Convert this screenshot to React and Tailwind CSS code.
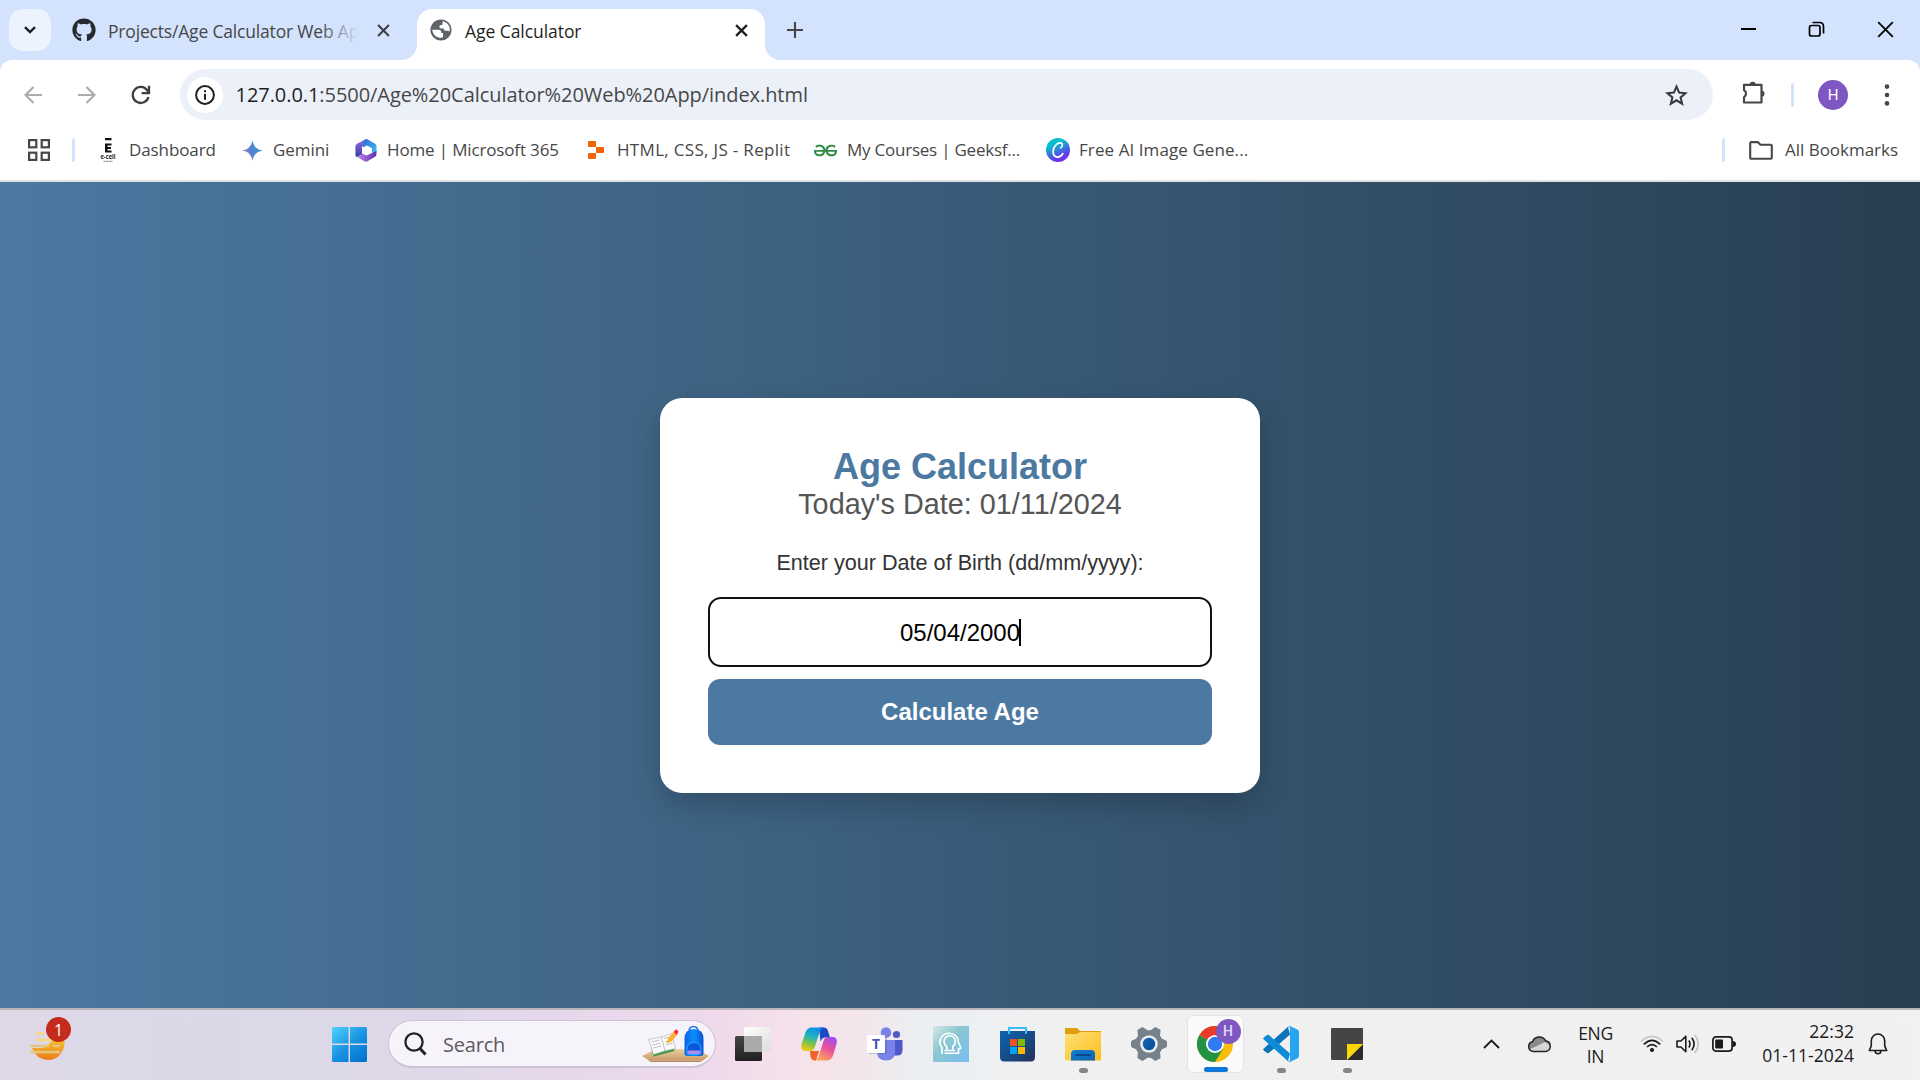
import React from 'react';
import { FaGithub } from 'react-icons/fa';
import { SiGeeksforgeeks } from 'react-icons/si';

/* ---------- Browser icons ---------- */

const GlobeIcon = () => (
  <svg width="22" height="22" viewBox="0 0 22 22" className="shrink-0">
    <circle cx="11" cy="11" r="10.6" fill="#5f6368" />
    <path
      d="M12.2 2.2C16.6 2.6 19.8 6.4 19.8 10.6c0 .8-.1 1.4-.3 2-.6-.3-1-.9-1.8-.9h-2c-1.2 0-1.9-.8-1.9-1.8V9.400h-2.700c-1 0-1.700-.7-1.700-1.600 0-.9.7-1.700 1.700-1.700h.8c.4 0 .5-.4.5-.9 0-.8.100-1.400.5-1.800-.3-.4-.6-.8-.7-1.200z"
      fill="#fff"
    />
    <path
      d="M2.300 10.800h5.800c2.200 0 3.300 1 3.300 2.600v.7h1.700v3c0 1-.7 1.700-1.700 1.700H9.500c-4-.8-7-4-7.200-8z"
      fill="#fff"
    />
  </svg>
);

const Cross = ({ size, width, color }) => (
  <svg width={size} height={size} viewBox="0 0 12 12" className="shrink-0">
    <path d="M1 1l10 10M11 1L1 11" stroke={color} strokeWidth={width} />
  </svg>
);

const Arrow = ({ flip }) => (
  <svg width="18" height="18" viewBox="0 0 18 18" className={flip ? 'rotate-180' : ''}>
    <path d="M18 9H2M9.500 1L1.500 9l8 8" fill="none" stroke="#acacac" strokeWidth="2.200" />
  </svg>
);

const ReloadIcon = () => (
  <svg width="20" height="20" viewBox="0 0 20 20">
    <path d="M17.500 12A8 8 0 1 1 16.200 5.200L17.500 7" fill="none" stroke="#3c4043" strokeWidth="2.300" />
    <path d="M18 .8v7.400h-7.400" fill="none" stroke="#3c4043" strokeWidth="2.300" />
  </svg>
);

const InfoIcon = () => (
  <svg width="20" height="20" viewBox="0 0 20 20">
    <circle cx="10" cy="10" r="8.900" fill="none" stroke="#1f1f1f" strokeWidth="2" />
    <rect x="9" y="8.800" width="2" height="6" fill="#1f1f1f" />
    <rect x="9" y="5.200" width="2" height="2" fill="#1f1f1f" />
  </svg>
);

const StarIcon = () => (
  <svg width="23" height="22" viewBox="0 0 23 22">
    <path
      d="M11.500 2.600l2.600 6 6.400.6-4.900 4.200 1.500 6.300-5.600-3.400-5.600 3.400 1.500-6.300L2.500 9.200l6.400-.6z"
      fill="none"
      stroke="#3c3c3c"
      strokeWidth="2.100"
    />
  </svg>
);

const PuzzleIcon = () => (
  <svg width="26" height="26" viewBox="0 0 26 26">
    <path
      d="M3 4.800h17.500v17.700H3v-5.300a4.200 4.200 0 0 0 0-7.200z"
      fill="none"
      stroke="#474747"
      strokeWidth="2.200"
      strokeLinejoin="round"
    />
    <path d="M8.500 4.200a3.300 3.300 0 0 1 6.400 0zM21 10.400a3.200 3.200 0 0 1 0 6.300z" fill="#474747" />
  </svg>
);

const FolderIcon = () => (
  <svg width="24" height="19" viewBox="0 0 24 19" className="shrink-0">
    <path
      d="M1.200 2.200q0-1.100 1.100-1.100h6.500l2.600 2.700h10.300q1.100 0 1.100 1.100v11.800q0 1.100-1.100 1.100H2.300q-1.100 0-1.100-1.100z"
      fill="none"
      stroke="#474747"
      strokeWidth="2.100"
    />
  </svg>
);

const AppsIcon = () => (
  <svg width="22" height="22" viewBox="0 0 22 22" className="shrink-0">
    <g fill="none" stroke="#474747" strokeWidth="2.200">
      <rect x="1.100" y="1.100" width="7.200" height="7.200" />
      <rect x="13.700" y="1.100" width="7.200" height="7.200" />
      <rect x="1.100" y="13.700" width="7.200" height="7.200" />
      <rect x="13.700" y="13.700" width="7.200" height="7.200" />
    </g>
  </svg>
);

const EcellIcon = () => (
  <svg width="16" height="25" viewBox="0 0 16 25">
    <path d="M5 0h6.500v2.200H5zM5 5.500h6.500v2H7.500v1.600h3.500v1.900H7.500v1.600h4v2H5z" fill="#111" />
    <text x="8" y="21" textAnchor="middle" fontSize="6.800" fontWeight="700" fontFamily="Open Sans" fill="#222" textLength="15" lengthAdjust="spacingAndGlyphs">e-cell</text>
    <path d="M3.500 23.300h9" stroke="#777" strokeWidth="1" strokeDasharray="2 .6" />
  </svg>
);

const GeminiIcon = () => (
  <svg width="21" height="21" viewBox="0 0 21 21">
    <defs>
      <linearGradient id="gem" x1="0" y1=".6" x2="1" y2=".4">
        <stop offset="0" stopColor="#a07bc5" />
        <stop offset=".45" stopColor="#4f83cc" />
        <stop offset="1" stopColor="#3aa0e0" />
      </linearGradient>
    </defs>
    <path d="M10.500 0C11.200 6 15 9.800 21 10.500 15 11.200 11.200 15 10.500 21 9.800 15 6 11.200 0 10.500 6 9.800 9.800 6 10.500 0z" fill="url(#gem)" />
  </svg>
);

const M365Icon = () => (
  <svg width="22" height="23" viewBox="0 0 22 23">
    <defs>
      <linearGradient id="ma" x1="0" y1="0" x2="0" y2="1">
        <stop offset="0" stopColor="#a36ae0" />
        <stop offset="1" stopColor="#2f3fa8" />
      </linearGradient>
      <linearGradient id="mb" x1="0" y1="0" x2="1" y2="1">
        <stop offset="0" stopColor="#2c69d6" />
        <stop offset="1" stopColor="#3ec4f2" />
      </linearGradient>
      <linearGradient id="mc" x1="0" y1="0" x2="1" y2="0">
        <stop offset="0" stopColor="#c585ee" />
        <stop offset="1" stopColor="#5c34a6" />
      </linearGradient>
    </defs>
    <path d="M11 0L2 4.800Q.4 5.700.4 7.500v8.200q0 1.600 1.500 2.500L7 15.500V8l6-7z" fill="url(#ma)" />
    <path d="M11 0q-3 1.500-3 5v3.500l4-2 5 2.800v5.200l3.600-.8q.9-.5.9-1.800V7.200q0-1.600-1.400-2.400L12.800.4Q12 0 11 0z" fill="url(#mb)" />
    <path d="M1.500 17.500l7.800 4.700q1.600.9 3.300 0l7.400-4.400q1.500-.9 1.500-2.800V12l-10 4.600-4.500-2q-1 3.500-5.500 2.900z" fill="url(#mc)" />
    <path d="M11 7.300l3.800 2v4.600l-3.800 2.200-3.800-2.200V9.300z" fill="#fff" />
  </svg>
);

const ReplitIcon = () => (
  <svg width="16" height="18" viewBox="0 0 16 18">
    <path d="M1 0h6q1 0 1 1v5H1Q0 6 0 5V1Q0 0 1 0zM8 6h7q1 0 1 1v4q0 1-1 1H8zM1 12h7v5q0 1-1 1H1q-1 0-1-1v-4q0-1 1-1z" fill="#f26207" />
  </svg>
);

const CanvaIcon = () => (
  <svg width="24" height="24" viewBox="0 0 24 24">
    <defs>
      <linearGradient id="canva" x1=".25" y1="0" x2=".7" y2="1">
        <stop offset="0" stopColor="#00c4cc" />
        <stop offset=".25" stopColor="#0bbdd0" />
        <stop offset=".75" stopColor="#5a43e8" />
        <stop offset="1" stopColor="#7d2ae8" />
      </linearGradient>
    </defs>
    <circle cx="12" cy="12" r="12" fill="url(#canva)" />
    <path
      d="M14.800 9.800c1.800-.8 2.300-4.300 0-4.900-3.300-.7-7.300 3.500-7.700 8.300-.3 3.600 1.800 6.200 4.900 5.900 2.200-.2 3.900-1.500 4.800-3.500"
      fill="none"
      stroke="#fff"
      strokeWidth="1.700"
      strokeLinecap="round"
    />
  </svg>
);

/* ---------- Taskbar icons ---------- */

const WeatherIcon = () => (
  <svg width="36" height="28" viewBox="0 0 36 28">
    <defs>
      <linearGradient id="sun" x1="0" y1="0" x2="0" y2="1">
        <stop offset="0" stopColor="#f5bf2a" />
        <stop offset="1" stopColor="#f07a1a" />
      </linearGradient>
    </defs>
    <path d="M2 16h10q7-2 10-8h12.500Q35 16 30.500 22T17.500 28Q6 27 2 16z" fill="url(#sun)" />
    <g strokeWidth="2.600" strokeLinecap="round">
      <path d="M7 1.500h6M7 8h14" stroke="#f4da7a" />
      <path d="M1.500 14H18M24 14h5M1.500 20H29" stroke="#e2c77f" />
    </g>
  </svg>
);

const WindowsIcon = () => (
  <svg width="35" height="35" viewBox="0 0 35 35">
    <defs>
      <linearGradient id="win" gradientUnits="userSpaceOnUse" x1="0" y1="0" x2="30" y2="35">
        <stop offset="0" stopColor="#4fd3fd" />
        <stop offset=".55" stopColor="#1a93e2" />
        <stop offset="1" stopColor="#0273d0" />
      </linearGradient>
    </defs>
    <path d="M1.500 0H16.500V16.500H0V1.500Q0 0 1.500 0zM18 0h15.500Q35 0 35 1.500v15H18zM0 18h16.500v17h-15Q0 35 0 33.500zM18 18h17v15.500q0 1.500-1.500 1.500H18z" fill="url(#win)" />
  </svg>
);

const SchoolArt = () => (
  <svg width="67" height="38" viewBox="0 0 67 38">
    <defs>
      <linearGradient id="desk" x1="0" y1="0" x2="0" y2="1">
        <stop offset="0" stopColor="#ecd0a0" />
        <stop offset="1" stopColor="#c99a68" />
      </linearGradient>
      <linearGradient id="bag" x1="0" y1="0" x2="1" y2="0">
        <stop offset="0" stopColor="#0a63e6" />
        <stop offset=".5" stopColor="#0d8dff" />
        <stop offset="1" stopColor="#0a4fd0" />
      </linearGradient>
    </defs>
    <path d="M0 31l14-7h40l13 7-6 4.500H7z" fill="url(#desk)" />
    <path d="M6 35.500h55l-3 1.500H9z" fill="#b5875a" />
    <path d="M7.500 16l4 15.500 21-5.500-1-3.500z" fill="#3f9a4b" />
    <path d="M6.500 14.500l13-2.500 10-3.500 4 15-11 2.500-11 3.500z" fill="#fafafa" stroke="#a9aaae" strokeWidth=".6" />
    <path d="M19.500 12l3.500 14M9.500 17l8-2M10.500 20l8-2M11.200 23l8-2M22 13.500l7-2M23 17l7-2M24 20l7-2" stroke="#a7a9af" strokeWidth=".7" />
    <path d="M24.500 18.500l1.500-5 5.500-6.500 3.500 3-5.500 6.500z" fill="#ffb02e" />
    <path d="M31.500 7l1.500-2q1-1 2.500.2t.5 2.500L34.800 10z" fill="#f8312f" />
    <path d="M47 7q0-5.500 4.500-5.500T56 7" fill="none" stroke="#2a78e8" strokeWidth="1.600" />
    <path d="M42.500 14q0-10 9.500-10t9.500 10v14q0 3-3 3h-13q-3 0-3-3z" fill="url(#bag)" />
    <path d="M45 28v-4q0-6.500 7-6.500t7 6.500v4q0 1.500-1.500 1.500h-11Q45 29.500 45 28z" fill="#0b57d8" stroke="#1fb0ff" strokeWidth=".9" />
    <path d="M45.500 25.500h13v2q0 1.500-1.500 1.500H47q-1.500 0-1.500-1.500z" fill="#a98cf5" />
  </svg>
);

const TaskViewIcon = () => (
  <svg width="36" height="36" viewBox="0 0 36 36">
    <defs>
      <linearGradient id="tvd" x1="0" y1="0" x2="0" y2="1">
        <stop offset="0" stopColor="#454545" />
        <stop offset="1" stopColor="#202020" />
      </linearGradient>
      <linearGradient id="tvl" x1="0" y1="0" x2="1" y2="1">
        <stop offset="0" stopColor="#fff" />
        <stop offset="1" stopColor="#dcdcdc" />
      </linearGradient>
    </defs>
    <rect x="0" y="10" width="27" height="25" rx="1.500" fill="url(#tvd)" />
    <rect x="9" y="1" width="27" height="25" rx="1.500" fill="url(#tvl)" />
    <path d="M9 10h18v16H10.500Q9 26 9 24.500z" fill="#aaa" />
  </svg>
);

const CopilotIcon = () => (
  <svg width="36" height="34" viewBox="0 0 36 34">
    <defs>
      <linearGradient id="cpa" x1=".6" y1="0" x2=".3" y2="1">
        <stop offset="0" stopColor="#0a8ee8" />
        <stop offset=".4" stopColor="#1fb4c0" />
        <stop offset=".7" stopColor="#86c440" />
        <stop offset="1" stopColor="#f3cb18" />
      </linearGradient>
      <linearGradient id="cpb" x1=".8" y1="0" x2=".3" y2="1">
        <stop offset="0" stopColor="#9a4df0" />
        <stop offset=".45" stopColor="#e8509c" />
        <stop offset="1" stopColor="#ffa55c" />
      </linearGradient>
    </defs>
    <path d="M18 .5h5q3 0 4 3.500l2 6.500h-5q-3 0-4.500 4z" fill="#1b49c8" />
    <path d="M9 24h9l-3 9.500h-1.500q-3 0-4-4z" fill="#f4622a" />
    <path d="M11 .5h12q-3 .5-4.500 5L14 19.500q-1.200 4.300-4 4.500H4.500Q-1 24 .5 17L4.500 5.500Q6.200.5 11 .5z" fill="url(#cpa)" />
    <path d="M25.500 33.500H13.500q3-.5 4.500-5l4.300-14Q23.600 10 26.500 10h5q5.500 0 4 7L32 28.500q-1.700 5-6.500 5z" fill="url(#cpb)" />
  </svg>
);

const TeamsIcon = () => (
  <svg width="36" height="34" viewBox="0 0 36 34">
    <circle cx="29.500" cy="7.500" r="3.600" fill="#5059c9" />
    <circle cx="19" cy="5.500" r="5.300" fill="#7b83eb" />
    <path d="M24 13h11.500v10q0 5.500-5 5.500H24z" fill="#5059c9" />
    <path d="M10 13h18v12q0 8.500-9 8.500T10 25z" fill="#7b83eb" />
    <rect x="2" y="9" width="18" height="18" fill="#4a50a8" opacity=".3" />
    <rect x="0" y="8" width="18" height="18" rx="1" fill="#fff" />
    <text x="9" y="22" textAnchor="middle" fontSize="14" fontWeight="700" fontFamily="Open Sans" fill="#4b53bc">T</text>
  </svg>
);

const HeadIcon = () => (
  <svg width="36" height="36" viewBox="0 0 36 36">
    <defs>
      <linearGradient id="head" x1="0" y1="0" x2="1" y2="1">
        <stop offset="0" stopColor="#d5e8e4" />
        <stop offset=".4" stopColor="#8cc8d0" />
        <stop offset="1" stopColor="#79bcf2" />
      </linearGradient>
    </defs>
    <rect width="36" height="36" fill="url(#head)" />
    <g fill="none" stroke="#fff" strokeWidth="1.600">
      <path d="M9 28v-6.500Q6.800 19 6.800 16.500A9.300 9 0 0 1 25.400 16l2.400 6-2.300 1v4.300H11.500" />
      <path d="M11.500 24.500h10.500M13.800 24v-3.500q-2.800-2-2.800-5a5.700 5.700 0 0 1 11.400 0q0 3-2.600 5V24" />
    </g>
  </svg>
);

const StoreIcon = () => (
  <svg width="35" height="36" viewBox="0 0 35 36">
    <defs>
      <linearGradient id="store" x1="0" y1="0" x2="1" y2="1">
        <stop offset="0" stopColor="#0b66b5" />
        <stop offset="1" stopColor="#243158" />
      </linearGradient>
    </defs>
    <path d="M0 5h35v26q0 4.500-4.500 4.500h-26Q0 35.500 0 31z" fill="url(#store)" />
    <path d="M9 8V2h17v6" fill="none" stroke="#38bdf2" strokeWidth="2" />
    <rect x="10" y="13" width="7" height="7" fill="#f25022" />
    <rect x="18" y="13" width="7" height="7" fill="#7fba00" />
    <rect x="10" y="21" width="7" height="7" fill="#00a4ef" />
    <rect x="18" y="21" width="7" height="7" fill="#ffb900" />
  </svg>
);

const ExplorerIcon = () => (
  <svg width="36" height="33" viewBox="0 0 36 33">
    <defs>
      <linearGradient id="fold" x1="0" y1="0" x2="1" y2="1">
        <stop offset="0" stopColor="#ffdf78" />
        <stop offset="1" stopColor="#fbbf1c" />
      </linearGradient>
      <linearGradient id="clip" x1="0" y1="0" x2="1" y2="1">
        <stop offset="0" stopColor="#0f7fd4" />
        <stop offset="1" stopColor="#0f62b0" />
      </linearGradient>
    </defs>
    <path d="M0 1q0-1 1-1h10q1.500 0 2.500 1.200L15 3h20q1 0 1 1v4H0z" fill="#dfa00c" />
    <path d="M0 6h12l3-2h20q1 0 1 1v26.500q0 1-1 1H1q-1 0-1-1z" fill="url(#fold)" />
    <path d="M6 32.500V26q0-4 4-4h16q4 0 4 4v6.500z" fill="url(#clip)" />
    <path d="M11 27h14" stroke="#0a4a8c" strokeWidth="2" strokeLinecap="round" />
  </svg>
);

const GEAR_ANGLES = [0, 60, 120, 180, 240, 300];

const SettingsIcon = () => (
  <svg width="36" height="36" viewBox="0 0 36 36">
    <defs>
      <linearGradient id="knob" x1="0" y1="0" x2="1" y2="1">
        <stop offset="0" stopColor="#1268b8" />
        <stop offset="1" stopColor="#0a4a98" />
      </linearGradient>
    </defs>
    <circle cx="18" cy="18" r="13.800" fill="#76818a" />
    {GEAR_ANGLES.map((a) => (
      <path
        key={a}
        d="M28 11.500l7 3q1 .5 1 1.700v3.600q0 1.200-1 1.700l-7 3z"
        fill="#76818a"
        transform={`rotate(${a} 18 18)`}
      />
    ))}
    <circle cx="18" cy="18" r="8.800" fill="#e9ecef" />
    <circle cx="18" cy="18" r="6.200" fill="url(#knob)" />
  </svg>
);

const ChromeIcon = () => (
  <svg width="36" height="36" viewBox="0 0 36 36">
    <circle cx="18" cy="18" r="18" fill="#fbbd0a" />
    <path d="M18 18L2.400 9a18 18 0 0 0 15.600 27l8-13z" fill="#229342" />
    <path d="M18 18L2.400 9a18 18 0 0 1 31.200 0z" fill="#e63b2e" />
    <circle cx="18" cy="18" r="9" fill="#fff" />
    <path d="M18 9h15.600v1.200H21z" fill="#e63b2e" />
    <circle cx="18" cy="18" r="7.200" fill="#2f7cf0" />
  </svg>
);

const VscodeIcon = () => (
  <svg width="36" height="36" viewBox="0 0 36 36">
    <path d="M27 8.500L6 26.800q-1 .8-2 .1L.8 24.600q-1.200-1 0-2.100L25 .7z" fill="#0a74bd" />
    <path d="M27 27.500L6 9.200Q5 8.400 4 9.100L.8 11.400q-1.200 1 0 2.100L25 35.300z" fill="#0f8bd8" />
    <path d="M25 .6q1-1 2.300-.4l7 3.300Q36 4.300 36 6v24q0 1.700-1.700 2.500l-7 3.300q-1.300.6-2.300-.4 2 .5 2-2.400V3Q27 .1 25 .6z" fill="#25a5f0" />
  </svg>
);

const StickyIcon = () => (
  <svg width="32" height="32" viewBox="0 0 32 32">
    <path d="M1 0h30q1 0 1 1v15L16 32H1q-1 0-1-1V1q0-1 1-1z" fill="#454545" />
    <path d="M32 16v15q0 1-1 1H16z" fill="#2c2c2c" />
    <path d="M16 16h16L16 32z" fill="#fbd704" />
  </svg>
);

/* ---------- Tray icons ---------- */

const CloudIcon = () => (
  <svg width="25" height="18" viewBox="0 0 25 18">
    <path d="M6 16.500a5 5 0 0 1-.5-9.800 7.200 7.200 0 0 1 13-1 5.500 5.500 0 0 1 .5 10.800z" fill="#8a8a8a" />
    <path d="M12 10l6-3 5 3.500q1.500 5-4 6H6q-3 0-4-2z" fill="#d6d6d6" />
    <path d="M6 16.500a5 5 0 0 1-.5-9.800 7.200 7.200 0 0 1 13-1 5.500 5.500 0 0 1 .5 10.800z" fill="none" stroke="#222" strokeWidth="1.500" />
  </svg>
);

const WifiIcon = () => (
  <svg width="24" height="18" viewBox="0 0 24 18">
    <path d="M1 6.500Q12-3.500 23 6.500" fill="none" stroke="#c2c2c2" strokeWidth="1.400" />
    <g fill="none" stroke="#1b1b1b" strokeWidth="1.700">
      <path d="M3.800 9.300q8.200-8 16.400 0" />
      <path d="M7 12q5-4.800 10 0" />
    </g>
    <circle cx="12" cy="15" r="2.100" fill="#1b1b1b" />
  </svg>
);

const VolumeIcon = () => (
  <svg width="24" height="20" viewBox="0 0 24 20">
    <g fill="none" stroke="#1b1b1b" strokeWidth="1.600" strokeLinejoin="round">
      <path d="M1 7h4l4.800-4.800v15.600L5 13H1z" />
      <path d="M12.800 6.500q2.400 3.500 0 7" />
      <path d="M15.800 3.800q4.600 6.200 0 12.400" />
    </g>
    <path d="M18.800 1q7 9 0 18" fill="none" stroke="#bdbdbd" strokeWidth="1.400" />
  </svg>
);

const BatteryIcon = () => (
  <svg width="24" height="16" viewBox="0 0 24 16">
    <rect x=".9" y=".9" width="19.200" height="14.200" rx="3" fill="none" stroke="#1b1b1b" strokeWidth="1.700" />
    <rect x="3.200" y="3.500" width="7.800" height="9" rx=".8" fill="#1b1b1b" />
    <path d="M21 5q3 .3 3 3t-3 3z" fill="#1b1b1b" />
  </svg>
);

const BellIcon = () => (
  <svg width="20" height="22" viewBox="0 0 20 22">
    <path
      d="M10 1a6.700 6.700 0 0 1 6.700 6.700v5.200l2 4.600H1.300l2-4.600V7.700A6.700 6.700 0 0 1 10 1z"
      fill="none"
      stroke="#1b1b1b"
      strokeWidth="1.600"
      strokeLinejoin="round"
    />
    <path d="M7.200 18a2.800 2.800 0 0 0 5.600 0" fill="none" stroke="#1b1b1b" strokeWidth="1.600" />
  </svg>
);

/* ---------- Sections ---------- */

const TabStrip = () => (
  <div className="flex h-[60px] items-end bg-[#d3e3fd] pl-[9px]">
    <div className="mb-[9px] flex h-[42px] w-[42px] items-center justify-center rounded-[14px] bg-[#ecf2fe]">
      <svg width="12" height="8" viewBox="0 0 12 8">
        <path d="M1 1.200l5 4.800 5-4.800" fill="none" stroke="#1f1f1f" strokeWidth="2.400" />
      </svg>
    </div>
    <div className="mb-[9px] ml-[21px] flex h-[42px] w-[318px] items-center">
      <FaGithub className="h-6 w-6 shrink-0 text-[#24292f]" />
      <div className="relative ml-3 mt-[2px] w-[252px]">
        <div className="whitespace-nowrap text-[17.500px] tracking-[-0.180px] text-[#474747]">Projects/Age Calculator Web Ap</div>
        <div className="absolute inset-y-0 right-0 w-9 bg-gradient-to-r from-[#d3e3fd]/10 to-[#d3e3fd]" />
      </div>
      <div className="ml-[18px]">
        <Cross size={13} width={1.900} color="#3c4043" />
      </div>
    </div>
    <div className="h-[15px] w-[27px] shrink-0 pl-3">
      <div className="h-[15px] w-[15px] bg-[radial-gradient(circle_at_0_0,#d3e3fd_14.500px,#fff_15.200px)]" />
    </div>
    <div className="flex h-[51px] w-[348px] shrink-0 items-start rounded-t-[15px] bg-white pl-[13px]">
      <div className="flex h-[42px] items-center">
        <GlobeIcon />
        <div className="ml-[13px] mt-[3px] w-[270px] text-[17.500px] tracking-[-0.060px] text-[#1f1f1f]">Age Calculator</div>
        <Cross size={13} width={2.100} color="#1f1f1f" />
      </div>
    </div>
    <div className="h-[15px] w-[15px] shrink-0 bg-[radial-gradient(circle_at_100%_0,#d3e3fd_14.500px,#fff_15.200px)]" />
    <div className="mb-[9px] ml-[7px] flex h-[42px] items-center">
      <svg width="16" height="16" viewBox="0 0 16 16">
        <path d="M8 0v16M0 8h16" stroke="#474747" strokeWidth="2.100" />
      </svg>
    </div>
    <div className="mb-[10px] ml-auto mr-[26px] flex h-[42px] items-center">
      <div className="h-[2px] w-[15px] bg-black" />
      <svg width="17" height="17" viewBox="0 0 17 17" className="ml-[52px]">
        <g fill="none" stroke="#000" strokeWidth="1.700">
          <rect x="1.500" y="4.500" width="10.500" height="10.500" rx="2" />
          <path d="M4.500 1.500h7q4 0 4 4v7" />
        </g>
      </svg>
      <svg width="17" height="17" viewBox="0 0 17 17" className="ml-[52px]">
        <path d="M1.200 1.200l14.600 14.600M15.800 1.200L1.200 15.800" stroke="#000" strokeWidth="1.800" />
      </svg>
    </div>
  </div>
);

const Toolbar = () => (
  <div className="bg-[#d3e3fd]">
    <div className="flex h-[69px] items-center rounded-t-[12px] bg-white pl-6">
      <Arrow />
      <div className="ml-9">
        <Arrow flip />
      </div>
      <div className="ml-[35px]">
        <ReloadIcon />
      </div>
      <div className="ml-[29px] flex h-[51px] w-[1533px] items-center rounded-full bg-[#ecf0f9] pl-[7px]">
        <div className="flex h-9 w-9 items-center justify-center rounded-full bg-white">
          <InfoIcon />
        </div>
        <div className="ml-[12.500px] text-[20px] tracking-[-0.060px] text-[#474747]">
          <span className="text-[#1f1f1f]">127.0.0.1</span>:5500/Age%20Calculator%20Web%20App/index.html
        </div>
        <div className="ml-auto mr-[25px]">
          <StarIcon />
        </div>
      </div>
      <div className="-mt-[4px] ml-[28px]">
        <PuzzleIcon />
      </div>
      <div className="ml-6 h-6 w-[3px] rounded-full bg-[#d3e3fd]" />
      <div className="ml-6 flex h-[30px] w-[30px] items-center justify-center rounded-full bg-[#7e57c2] pt-px font-[Roboto] text-[15px] text-white">H</div>
      <svg width="6" height="22" viewBox="0 0 6 22" className="ml-9">
        <g fill="#474747">
          <circle cx="3" cy="2.600" r="2.300" />
          <circle cx="3" cy="11" r="2.300" />
          <circle cx="3" cy="19.400" r="2.300" />
        </g>
      </svg>
    </div>
  </div>
);

const Bookmark = ({ icon, label, slot, text }) => (
  <div className={`flex shrink-0 items-center whitespace-nowrap ${slot}`}>
    {icon}
    <span className={text}>{label}</span>
  </div>
);

const BookmarksBar = () => (
  <div className="flex h-[53px] items-center border-b-2 border-[#dfe0e2] bg-white pb-[9px] pl-[28px] text-[17px] text-[#474747]">
    <AppsIcon />
    <div className="ml-[22px] h-6 w-[3px] rounded-full bg-[#d3e3fd]" />
    <div className="ml-[25px] flex">
      <Bookmark icon={<EcellIcon />} label="Dashboard" slot="w-[142px]" text="ml-[13px] tracking-[-0.100px]" />
      <Bookmark icon={<GeminiIcon />} label="Gemini" slot="w-[113px]" text="ml-[10px] tracking-[-0.060px]" />
      <Bookmark icon={<M365Icon />} label="Home | Microsoft 365" slot="w-[233px]" text="ml-[10px] tracking-[-0.150px]" />
      <Bookmark icon={<ReplitIcon />} label="HTML, CSS, JS - Replit" slot="w-[226px]" text="ml-[13px] tracking-[0.320px]" />
      <Bookmark icon={<SiGeeksforgeeks className="h-[23px] w-[23px] text-[#2f8d46]" />} label="My Courses | Geeksf..." slot="w-[232px]" text="ml-[10px] tracking-[-0.230px]" />
      <Bookmark icon={<CanvaIcon />} label="Free AI Image Gene..." slot="w-[210px]" text="ml-[9px] tracking-[0.080px]" />
    </div>
    <div className="ml-auto mr-[22px] flex items-center">
      <div className="mr-6 h-6 w-[3px] rounded-full bg-[#d3e3fd]" />
      <FolderIcon />
      <span className="ml-3 tracking-[-0.030px]">All Bookmarks</span>
    </div>
  </div>
);

const AgeCard = () => (
  <div className="flex h-[395px] w-[600px] flex-col items-center rounded-[22px] bg-white px-12 pt-12 text-center font-['Liberation_Sans',Arial,sans-serif] shadow-[0_12px_30px_rgba(0,0,0,0.2)]">
    <h1 className="text-[36px] font-bold leading-[41px] text-[#4b79a1]">Age Calculator</h1>
    <p className="text-[28.800px] leading-[35px] text-[#555]">Today&apos;s Date: 01/11/2024</p>
    <p className="mt-[28px] text-[21.600px] leading-[25px] text-[#333]">Enter your Date of Birth (dd/mm/yyyy):</p>
    <div className="mt-[22px] flex h-[70px] w-full shrink-0 items-center justify-center rounded-[13px] border-[2.500px] border-[#101010] pt-[2px] text-[24px] text-black">
      05/04/2000
      <span className="-mx-px h-[27px] w-[2px] bg-black" />
    </div>
    <div className="mt-3 flex h-[66px] w-full shrink-0 items-center justify-center rounded-[12px] bg-[#4b79a1] text-[24px] font-bold text-white">Calculate Age</div>
  </div>
);

const Slot = ({ children, dot }) => (
  <div className="relative flex h-[66px] w-[66px] shrink-0 items-center justify-center">
    {children}
    {dot && <div className="absolute bottom-[4px] left-[29px] h-[5px] w-[9px] rounded-full bg-[#868686]" />}
  </div>
);

const Taskbar = () => (
  <div className="flex h-[72px] items-center border-t-2 border-[#b9b5ba] bg-[linear-gradient(90deg,#dfd8e7_0px,#dad9e8_190px,#dfd8e8_440px,#eed8ec_700px,#f6e2ea_800px,#f3e6ea_860px,#ebeff3_920px,#f0f0f0_1060px,#f1f1f1_1920px)] pb-[2px]">
    <div className="relative ml-[30px] mt-[4px] w-[302px]">
      <WeatherIcon />
      <div className="absolute -top-[15px] left-[16px] flex h-[25px] w-[25px] items-center justify-center rounded-full bg-[#c42b1c] text-[16px] text-white">1</div>
    </div>
    <WindowsIcon />
    <div className="ml-[21px] flex h-[48px] w-[328px] items-center rounded-full border border-b-2 border-[#cdc3d6] bg-[#f7f3fa] pl-[15px] pr-1.5">
      <svg width="23" height="24" viewBox="0 0 23 24">
        <circle cx="10" cy="10" r="8.600" fill="none" stroke="#222" strokeWidth="2.300" />
        <path d="M16 16.500l5.500 6" stroke="#222" strokeWidth="3" />
      </svg>
      <span className="ml-4 mt-[2px] text-[20px] tracking-[-0.200px] text-[#5c5a60]">Search</span>
      <div className="ml-auto">
        <SchoolArt />
      </div>
    </div>
    <div className="ml-[4px] flex">
      <Slot><TaskViewIcon /></Slot>
      <Slot><CopilotIcon /></Slot>
      <Slot><TeamsIcon /></Slot>
      <Slot><HeadIcon /></Slot>
      <Slot><StoreIcon /></Slot>
      <Slot dot><ExplorerIcon /></Slot>
      <Slot><SettingsIcon /></Slot>
      <Slot>
        <div className="relative flex h-[58px] w-[57px] items-center justify-center rounded-[6px] border border-[#e4e4e4] bg-[#fafafa]">
          <ChromeIcon />
          <div className="absolute right-[2px] top-[3px] flex h-[25px] w-[25px] items-center justify-center rounded-full bg-[#7e57c2] font-[Roboto] text-[14px] font-medium text-[#e4daf4]">H</div>
          <div className="absolute bottom-0 left-[16px] h-[5px] w-6 rounded-full bg-[#0a78d4]" />
        </div>
      </Slot>
      <Slot dot><VscodeIcon /></Slot>
      <Slot dot><StickyIcon /></Slot>
    </div>
    <div className="ml-auto mr-[32px] flex items-center text-[17.500px] leading-[24px] tracking-[-0.300px] text-[#1b1b1b]">
      <svg width="17" height="10" viewBox="0 0 17 10">
        <path d="M1 9l7.500-7.500L16 9" fill="none" stroke="#1b1b1b" strokeWidth="1.800" />
      </svg>
      <div className="ml-[27px]"><CloudIcon /></div>
      <div className="ml-[21px] w-[45px] pt-px text-center leading-[23px]">ENG<br />IN</div>
      <div className="ml-[22px]"><WifiIcon /></div>
      <div className="ml-3"><VolumeIcon /></div>
      <div className="ml-3"><BatteryIcon /></div>
      <div className="-mt-[2px] ml-[18px] w-[100px] text-right tracking-[0.050px]">22:32<br />01-11-2024</div>
      <div className="ml-[14px]"><BellIcon /></div>
    </div>
  </div>
);

export default function App() {
  return (
    <div className="flex h-[1080px] w-[1920px] flex-col overflow-hidden bg-white font-['Open_Sans','Noto_Sans',sans-serif]">
      <TabStrip />
      <Toolbar />
      <BookmarksBar />
      <main className="flex min-h-0 flex-1 items-center justify-center bg-[linear-gradient(to_right,#4b79a1,#283e51)]">
        <AgeCard />
      </main>
      <Taskbar />
    </div>
  );
}
